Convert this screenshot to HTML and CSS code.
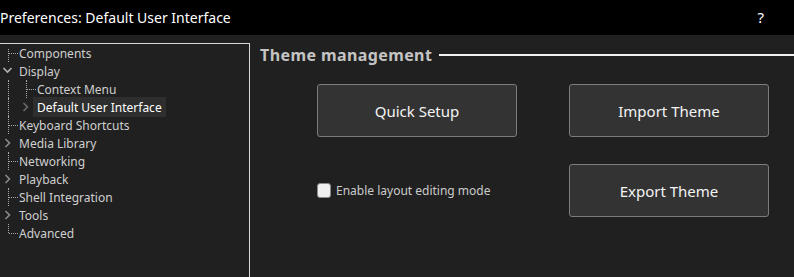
FILE: index.html
```html
<!DOCTYPE html>
<html lang="en">
<head>
	<meta charset="UTF-8">
	<title>Preferences: Default User Interface</title>
	<link rel="stylesheet" href="styles.css">
</head>
<body>

	<div class="titlebar">
		<span class="title">Preferences: Default User Interface</span>
		<span class="help">?</span>
	</div>

	<div class="main">
		<div class="tree">
			<div class="row"><span class="twig leaf first"></span><span class="label">Components</span></div>
			<div class="row"><span class="twig open"><svg width="18" height="18"><path d="M2.5 6 L6.5 10 L10.5 6" fill="none" stroke="#b4b4b4" stroke-width="1.6"/></svg></span><span class="label">Display</span></div>
			<div class="row"><span class="twig pipe"></span><span class="twig leaf"></span><span class="label">Context Menu</span></div>
			<div class="row"><span class="twig pipe"></span><span class="twig closed"><svg width="18" height="18"><path d="M4.5 5 L8.5 9 L4.5 13" fill="none" stroke="#6a6a6a" stroke-width="1.6"/></svg></span><span class="label selected">Default User Interface</span></div>
			<div class="row"><span class="twig leaf"></span><span class="label">Keyboard Shortcuts</span></div>
			<div class="row"><span class="twig closed"><svg width="18" height="18"><path d="M4.5 5 L8.5 9 L4.5 13" fill="none" stroke="#8a8a8a" stroke-width="1.6"/></svg></span><span class="label">Media Library</span></div>
			<div class="row"><span class="twig leaf"></span><span class="label">Networking</span></div>
			<div class="row"><span class="twig closed"><svg width="18" height="18"><path d="M4.5 5 L8.5 9 L4.5 13" fill="none" stroke="#8a8a8a" stroke-width="1.6"/></svg></span><span class="label">Playback</span></div>
			<div class="row"><span class="twig leaf"></span><span class="label">Shell Integration</span></div>
			<div class="row"><span class="twig closed"><svg width="18" height="18"><path d="M4.5 5 L8.5 9 L4.5 13" fill="none" stroke="#8a8a8a" stroke-width="1.6"/></svg></span><span class="label">Tools</span></div>
			<div class="row"><span class="twig leaf last"></span><span class="label">Advanced</span></div>
		</div>

		<div class="page">
			<div class="group-title">
				<span>Theme management</span>
				<span class="rule"></span>
			</div>
			<div class="actions">
				<button>Quick Setup</button>
				<button>Import Theme</button>
				<label class="check"><input type="checkbox"> Enable layout editing mode</label>
				<button>Export Theme</button>
			</div>
		</div>
	</div>

</body>
</html>
```

FILE: styles.css
```css
html, body {
	margin: 0;
	height: 100%;
}
body {
	background: #202020;
	font-family: "Noto Sans", "Liberation Sans", sans-serif;
	color: #cfcfcf;
	display: flex;
	flex-direction: column;
	overflow: hidden;
}
.titlebar {
	height: 35px;
	flex: none;
	background: #000;
	color: #fff;
	display: flex;
	align-items: center;
	justify-content: space-between;
	font-size: 14px;
	padding: 0 30px 1px 0;
	box-sizing: border-box;
}
.help {
	font-size: 15px;
}
.main {
	flex: 1;
	display: flex;
	padding-top: 8px;
}
.tree {
	width: 248px;
	flex: none;
	margin-left: -1px;
	border: 1px solid #d8d8d8;
	border-bottom: none;
	padding-left: 1px;
}
.row {
	display: flex;
	align-items: center;
	height: 18px;
	font-size: 12px;
}
.twig {
	width: 18px;
	height: 18px;
	flex: none;
	position: relative;
}
.twig svg {
	display: block;
}
.leaf::before, .pipe::before {
	content: "";
	position: absolute;
	left: 7px;
	top: 0;
	bottom: 0;
	border-left: 1px dotted #a8a8a8;
}
.leaf::after {
	content: "";
	position: absolute;
	left: 8px;
	top: 9px;
	width: 9px;
	border-top: 1px dotted #a8a8a8;
}
.leaf.first::before {
	top: 5px;
}
.leaf.last::before {
	bottom: 9px;
}
.label {
	padding: 2px 4px 1px 0;
	white-space: nowrap;
}
.label.selected {
	background: #2e2e2e;
	color: #fff;
	margin-left: -4px;
	padding-left: 4px;
}
.page {
	flex: 1;
	padding-left: 10px;
}
.group-title {
	display: flex;
	align-items: center;
	gap: 7px;
	height: 22px;
	margin-top: 1px;
	font-size: 16px;
	font-weight: bold;
	letter-spacing: 0.4px;
	color: #c4c4c4;
}
.rule {
	flex: 1;
	height: 2px;
	background: #f2f2f2;
}
.actions {
	display: grid;
	grid-template-columns: 200px 200px;
	grid-auto-rows: 53px;
	column-gap: 52px;
	row-gap: 27px;
	margin: 18px 0 0 57px;
}
button {
	background: #333;
	border: 1px solid #7c7c7c;
	border-radius: 3px;
	color: #f4f4f4;
	font-family: inherit;
	font-size: 15px;
}
.check {
	display: flex;
	align-items: center;
	gap: 5px;
	font-size: 12px;
	color: #cbcbcb;
}
.check input {
	appearance: none;
	margin: 0;
	width: 14px;
	height: 15px;
	background: #f0f0f0;
	border: 1px solid #8a8a8a;
	border-radius: 3px;
}
```
